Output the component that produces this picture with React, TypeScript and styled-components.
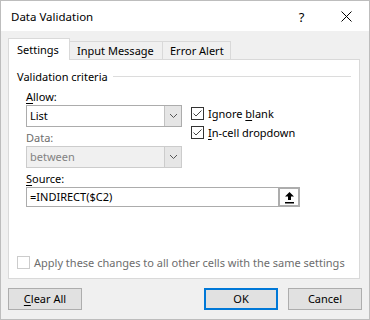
import React from "react";
import styled, { createGlobalStyle } from "styled-components";

const Global = createGlobalStyle`
  html, body { margin: 0; padding: 0; background: #f0f0f0; }
  body { font-family: "Noto Sans", sans-serif; font-size: 11px; color: #000; }
  * { box-sizing: border-box; }
`;

const Window = styled.div`
  width: 370px;
  height: 320px;
  border: 1px solid #bdbdbd;
  background: #f0f0f0;
  display: flex;
  flex-direction: column;
`;

const TitleBar = styled.div`
  height: 30px;
  background: #fff;
  display: flex;
  align-items: center;
  padding-left: 10px;
`;

const Title = styled.div`
  flex: 1;
  font-size: 11.5px;
  padding-top: 1px;
`;

const TitleButton = styled.div`
  width: 45px;
  height: 30px;
  display: flex;
  align-items: center;
  justify-content: center;
  font-size: 13px;
  padding-top: 1px;
`;

const Body = styled.div`
  flex: 1;
  padding: 7px 0 0 7px;
  display: flex;
  flex-direction: column;
`;

const Tabs = styled.div`
  display: flex;
  align-items: flex-end;
  height: 22px;
  position: relative;
  z-index: 1;
  margin-bottom: -1px;
`;

const Tab = styled.div<{ $active?: boolean; $w: number }>`
  width: ${(p) => p.$w}px;
  height: ${(p) => (p.$active ? 22 : 19)}px;
  padding-left: ${(p) => (p.$active ? 8 : 7)}px;
  padding-bottom: ${(p) => (p.$active ? 1 : 0)}px;
  display: flex;
  align-items: center;
  background: ${(p) => (p.$active ? "#fff" : "#f0f0f0")};
  border: 1px solid #d9d9d9;
  border-bottom: ${(p) => (p.$active ? "none" : "1px solid #d9d9d9")};
  margin-left: -1px;
  &:first-child { margin-left: 0; }
`;

const Panel = styled.div`
  width: 352px;
  height: 220px;
  background: #fff;
  border: 1px solid #d9d9d9;
  padding: 8px 8px 0 8px;
  display: flex;
  flex-direction: column;
`;

const GroupHeader = styled.div`
  display: flex;
  align-items: center;
  gap: 5px;
  height: 16px;
  &::after {
    content: "";
    flex: 1;
    height: 1px;
    background: #dcdcdc;
  }
`;

const Criteria = styled.div`
  padding-left: 9px;
  padding-top: 3px;
  display: flex;
  flex-direction: column;
`;

const TopRow = styled.div`
  display: flex;
  gap: 9px;
`;

const Column = styled.div`
  display: flex;
  flex-direction: column;
`;

const Label = styled.div<{ $disabled?: boolean; $gap?: number }>`
  height: 18px;
  margin-top: ${(p) => p.$gap ?? 0}px;
  display: flex;
  align-items: center;
  color: ${(p) => (p.$disabled ? "#6d6d6d" : "#000")};
`;

const U = styled.span`
  text-decoration: underline;
  text-underline-offset: 2px;
`;

const Select = styled.div<{ $disabled?: boolean }>`
  width: 156px;
  height: 22px;
  display: flex;
  border: 1px solid ${(p) => (p.$disabled ? "#cccccc" : "#acacac")};
  background: ${(p) => (p.$disabled ? "#f0f0f0" : "#fff")};
  color: ${(p) => (p.$disabled ? "#838383" : "#000")};
`;

const SelectText = styled.div`
  flex: 1;
  padding-left: 3px;
  padding-bottom: 1px;
  display: flex;
  align-items: center;
`;

const Arrow = styled.div<{ $disabled?: boolean }>`
  width: 17px;
  background: ${(p) => (p.$disabled ? "#e6e6e6" : "#e5e5e5")};
  border-left: 1px solid ${(p) => (p.$disabled ? "#cccccc" : "#c2c2c2")};
  display: flex;
  align-items: center;
  justify-content: center;
`;

const Checks = styled.div`
  display: flex;
  flex-direction: column;
  gap: 6px;
  padding-top: 20px;
`;

const CheckRow = styled.div<{ $disabled?: boolean }>`
  display: flex;
  align-items: center;
  gap: 4px;
  height: 13px;
  white-space: nowrap;
  color: ${(p) => (p.$disabled ? "#6d6d6d" : "#000")};
`;

const Box = styled.div<{ $disabled?: boolean }>`
  flex: none;
  width: 13px;
  height: 13px;
  border: 1px solid ${(p) => (p.$disabled ? "#cccccc" : "#333")};
  background: #fff;
  display: flex;
  align-items: center;
  justify-content: center;
`;

const SourceBox = styled.div`
  width: 274px;
  height: 20px;
  display: flex;
  border: 1px solid #acacac;
`;

const SourceText = styled.div`
  flex: 1;
  padding-left: 3px;
  padding-bottom: 1px;
  display: flex;
  align-items: center;
`;

const RefButton = styled.div`
  width: 22px;
  margin: -1px -1px -1px 0;
  border: 2px solid #adadad;
  background: #fdfdfd;
  display: flex;
  align-items: center;
  justify-content: center;
`;

const Spacer = styled.div`
  flex: 1;
`;

const ApplyRow = styled(CheckRow)`
  margin-bottom: 9px;
`;

const Footer = styled.div`
  display: flex;
  padding-top: 9px;
  gap: 10px;
  width: 354px;
`;

const Button = styled.div<{ $default?: boolean }>`
  width: 74px;
  height: 22px;
  display: flex;
  align-items: center;
  justify-content: center;
  padding-bottom: 1px;
  background: #e1e1e1;
  border: ${(p) => (p.$default ? "2px solid #0078d7" : "1px solid #adadad")};
`;

const Check = () => (
  <svg width="11" height="11" viewBox="0 0 11 11">
    <path d="M1.5 5.5 L4 8 L9.5 2.5" fill="none" stroke="#444" strokeWidth="1" />
  </svg>
);

const Chevron = () => (
  <svg width="9" height="6" viewBox="0 0 9 6">
    <path d="M1 1 L4.5 4.5 L8 1" fill="none" stroke="#555" strokeWidth="1" />
  </svg>
);

const UpArrow = () => (
  <svg width="11" height="13" viewBox="0 0 11 13">
    <path d="M5.5 1 L10 5.5 L7 5.5 L7 9 L4 9 L4 5.5 L1 5.5 Z" fill="#000" />
    <rect x="1" y="11" width="9" height="1.5" fill="#000" />
  </svg>
);

export default function App() {
  return (
    <>
      <Global />
      <Window>
        <TitleBar>
          <Title>Data Validation</Title>
          <TitleButton>?</TitleButton>
          <TitleButton>
            <svg width="11" height="11" viewBox="0 0 11 11">
              <path d="M0.5 0.5 L10.5 10.5 M10.5 0.5 L0.5 10.5" stroke="#000" strokeWidth="1" />
            </svg>
          </TitleButton>
        </TitleBar>
        <Body>
          <Tabs>
            <Tab $active $w={62}>Settings</Tab>
            <Tab $w={94}>Input Message</Tab>
            <Tab $w={69}>Error Alert</Tab>
          </Tabs>
          <Panel>
            <GroupHeader>Validation criteria</GroupHeader>
            <Criteria>
              <TopRow>
                <Column>
                  <Label>
                    <span>
                      <U>A</U>llow:
                    </span>
                  </Label>
                  <Select>
                    <SelectText>List</SelectText>
                    <Arrow>
                      <Chevron />
                    </Arrow>
                  </Select>
                  <Label $disabled $gap={1}>Data:</Label>
                  <Select $disabled>
                    <SelectText>between</SelectText>
                    <Arrow $disabled>
                      <Chevron />
                    </Arrow>
                  </Select>
                </Column>
                <Checks>
                  <CheckRow>
                    <Box>
                      <Check />
                    </Box>
                    <span>
                      Ignore <U>b</U>lank
                    </span>
                  </CheckRow>
                  <CheckRow>
                    <Box>
                      <Check />
                    </Box>
                    <span>
                      <U>I</U>n-cell dropdown
                    </span>
                  </CheckRow>
                </Checks>
              </TopRow>
              <Label $gap={1}>
                <span>
                  <U>S</U>ource:
                </span>
              </Label>
              <SourceBox>
                <SourceText>=INDIRECT($C2)</SourceText>
                <RefButton>
                  <UpArrow />
                </RefButton>
              </SourceBox>
            </Criteria>
            <Spacer />
            <ApplyRow $disabled>
              <Box $disabled />
              <span>Apply these changes to all other cells with the same settings</span>
            </ApplyRow>
          </Panel>
          <Footer>
            <Button>
              <span>
                <U>C</U>lear All
              </span>
            </Button>
            <Spacer />
            <Button $default>OK</Button>
            <Button>Cancel</Button>
          </Footer>
        </Body>
      </Window>
    </>
  );
}
